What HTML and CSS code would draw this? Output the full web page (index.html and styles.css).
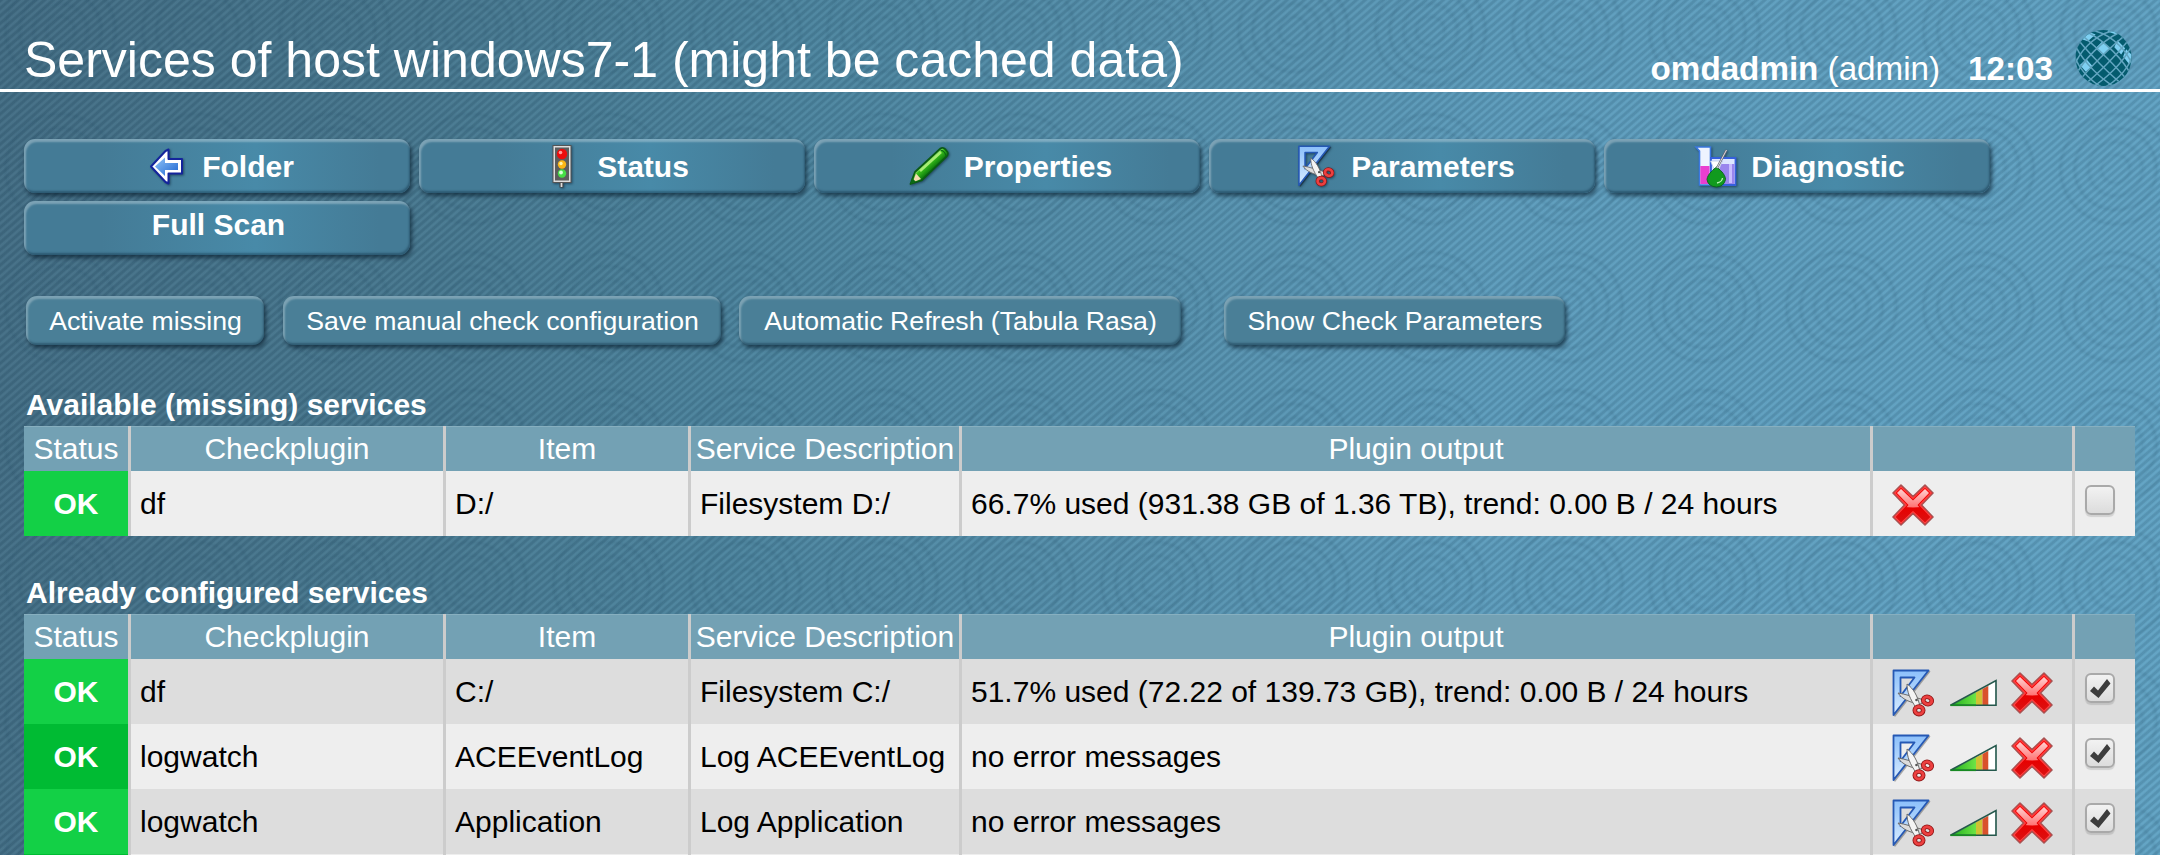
FILE: index.html
```html
<!DOCTYPE html>
<html lang="en">
<head>
<meta charset="utf-8">
<title>Services of host windows7-1</title>
<link rel="stylesheet" href="styles.css">
</head>
<body>
<svg class="defs" aria-hidden="true">
  <defs>
    <linearGradient id="blue" x1="0" y1="0" x2="1" y2="1"><stop offset="0" stop-color="#8fc4f8"/><stop offset="1" stop-color="#1f66d0"/></linearGradient>
    <linearGradient id="rule" x1="0" y1="0" x2="0" y2="1"><stop offset="0" stop-color="#8cc0fb"/><stop offset="1" stop-color="#d9ecff"/></linearGradient>
    <linearGradient id="shine" x1="0" y1="0" x2="0" y2="1"><stop offset="0" stop-color="#ffd0d0"/><stop offset="1" stop-color="#ff7070"/></linearGradient>
    <linearGradient id="red" x1="0" y1="0" x2="0" y2="1"><stop offset="0" stop-color="#fa0c0c"/><stop offset=".55" stop-color="#e80000"/><stop offset="1" stop-color="#d81414"/></linearGradient>
    <linearGradient id="green" x1="0" y1="0" x2="1" y2="0"><stop offset="0" stop-color="#1fae1f"/><stop offset="1" stop-color="#6ee446"/></linearGradient>
    <linearGradient id="pen" gradientUnits="userSpaceOnUse" x1="16" y1="12" x2="26" y2="23"><stop offset="0" stop-color="#1c9c10"/><stop offset=".35" stop-color="#b4f08a"/><stop offset=".5" stop-color="#3cc41c"/><stop offset="1" stop-color="#0c7a0c"/></linearGradient>
    <clipPath id="ball"><circle cx="30" cy="30" r="28.5"/></clipPath>
    <clipPath id="cross-top"><path d="M0 0H42V20Q21 27 0 20Z"/></clipPath>
    <symbol id="i-cross" viewBox="0 0 42 42">
      <path d="M9 1L21 12.500L33 1L41 9L29.500 21L41 33L33 41L21 29.500L9 41L1 33L12.500 21L1 9Z" fill="url(#red)" stroke="#a85252" stroke-width="1.600" stroke-linejoin="round"/>
      <path d="M9 2.800L21 14.300L33 2.800L39.200 9L27.700 21L39.200 33L33 39.200L21 27.700L9 39.200L2.800 33L14.300 21L2.800 9Z" fill="none" stroke="#ff4444" stroke-width="1.100" stroke-linejoin="round"/>
      <path d="M9 5L21 16.500L33 5L37 9L25.500 21L28 24H14L16.500 21L5 9Z" fill="url(#shine)" clip-path="url(#cross-top)"/>
    </symbol>
    <symbol id="i-rule" viewBox="0 0 42 48">
      <path d="M3 48L38.500 2.500L37 1.500L1.500 46Z" fill="#000" opacity=".3"/>
      <path d="M1.500 1.500H36.500L1.500 46ZM8.500 8.500V27L22.500 8.500Z" fill="url(#rule)" fill-rule="evenodd" stroke="#2558b4" stroke-width="1.800" stroke-linejoin="round"/>
      <path d="M6 24C13 25 22 28 32 31L29 35C18 34 10 30 6 24Z" fill="#dcdcdc" stroke="#6d6d6d" stroke-width="1"/>
      <path d="M15 15C21 19 26 27 28 38L24 38.500C18 30 15 23 15 15Z" fill="#f4f4f4" stroke="#6d6d6d" stroke-width="1"/>
      <circle cx="24.500" cy="31" r="1.300" fill="#555"/>
      <ellipse cx="35.500" cy="31.500" rx="4.300" ry="3.600" fill="none" stroke="#8c1414" stroke-width="4.600" transform="rotate(20 35.500 31.500)"/>
      <ellipse cx="35.500" cy="31.500" rx="4.300" ry="3.600" fill="none" stroke="#ec4040" stroke-width="3" transform="rotate(20 35.500 31.500)"/>
      <ellipse cx="27" cy="41.300" rx="4.200" ry="3.800" fill="none" stroke="#8c1414" stroke-width="4.600"/>
      <ellipse cx="27" cy="41.300" rx="4.200" ry="3.800" fill="none" stroke="#ec4040" stroke-width="3"/>
    </symbol>
    <symbol id="i-graph" viewBox="0 0 48 28">
      <path d="M2 26L27 13.200V26Z" fill="url(#green)"/>
      <path d="M27 13.200L33.500 9.900V26H27Z" fill="#cfc233"/>
      <path d="M33.500 9.900L39.500 6.700V26H33.500Z" fill="#d9512c"/>
      <path d="M39.500 6.700L46.500 2V26H39.500Z" fill="#fff"/>
      <path d="M1.500 26.300L47 1.500V26.300Z" fill="none" stroke="#24584c" stroke-width="1.600"/>
      <path d="M1.500 26.300H27" stroke="#178a22" stroke-width="1.600"/>
    </symbol>
    <symbol id="i-check" viewBox="0 0 30 30"><path d="M5 18L9 13.500L13 17.500L22 6L25.500 10.500L13.500 25Z" fill="#3d3d3d"/></symbol>
  </defs>
</svg>

<header class="top">
  <h1>Services of host windows7-1 (might be cached data)</h1>
  <div class="user"><span><b>omdadmin</b> (admin)</span><b>12:03</b></div>
  <svg class="globe" viewBox="0 0 60 60">
    <circle cx="30" cy="30" r="28.500" fill="#045b6e"/>
    <g clip-path="url(#ball)">
      <path d="M29 13L36 20L29 27L22 20ZM44 12L52 20L48 26.500L41 19ZM53 21L59 27L56 36L50 28.500ZM12.500 31L18.500 38L12 44L6 37ZM14 3L22 6L14 13L8 11ZM36 0L46 3L43 6L34 3Z" fill="#7fd0f2"/>
      <g fill="none" stroke="#62a5c0" stroke-width="1.500" transform="translate(0 3) rotate(45 30 30)">
        <ellipse cx="30" cy="30" rx="4.600" ry="44"/><ellipse cx="30" cy="30" rx="13.800" ry="42"/><ellipse cx="30" cy="30" rx="22.500" ry="38"/>
        <ellipse cx="30" cy="30" rx="44" ry="4.600"/><ellipse cx="30" cy="30" rx="42" ry="13.800"/><ellipse cx="30" cy="30" rx="38" ry="22.500"/>
      </g>
    </g>
  </svg>
</header>

<nav class="context">
  <a class="ctx">
    <svg class="ico" viewBox="0 0 42 42"><path d="M22.500 4.500V14H36V28.500H22.500V38.500L19.500 37L5 21.500L19.500 6Z" fill="#fff" stroke="#14249c" stroke-width="2" stroke-linejoin="round"/><path d="M19 12.500V18H32V25H19V31L9 21.500Z" fill="url(#blue)"/></svg>
    <span>Folder</span></a>
  <a class="ctx">
    <svg class="ico" viewBox="0 0 42 42"><path d="M20.500 37V42.500" stroke="#444" stroke-width="4"/><path d="M20.500 37V42" stroke="#ddd" stroke-width="1.800"/><rect x="12" y="0.500" width="18" height="37" fill="#dedede" stroke="#555" stroke-width="1"/><rect x="14" y="2.500" width="14" height="33" fill="#5d5d5d"/><circle cx="21" cy="9" r="5.200" fill="#ec0c0c"/><circle cx="19.500" cy="7.500" r="1.800" fill="#ff9a9a"/><circle cx="21" cy="19.500" r="4.200" fill="#fbb616"/><circle cx="20" cy="18.500" r="1.700" fill="#fff3ad"/><circle cx="21" cy="28.500" r="4.200" fill="#45dd45"/><circle cx="20" cy="27.500" r="1.900" fill="#d8ffd8"/></svg>
    <span>Status</span></a>
  <a class="ctx">
    <svg class="ico" viewBox="0 0 42 42"><path d="M2.500 39L7 27L32.500 3.500Q35 2 37.500 4.500L39.500 7Q40.500 9.500 38.500 11.500L13.500 35.500Z" fill="url(#pen)" stroke="#0b5c14" stroke-width="1.800" stroke-linejoin="round"/><path d="M8 28.500L13 34L4.500 37.500Z" fill="#f4dcb0"/><path d="M2.500 39L4 33L8 36.800Z" fill="#0b6a14"/><path d="M32.500 5Q37 6 38 11" fill="none" stroke="#0b6a14" stroke-width="1.200"/><path d="M12 26L33 7" stroke="#a8ee74" stroke-width="2.600"/></svg>
    <span>Properties</span></a>
  <a class="ctx">
    <svg class="ico" viewBox="0 0 42 48"><use href="#i-rule"/></svg>
    <span>Parameters</span></a>
  <a class="ctx">
    <svg class="ico" viewBox="0 0 42 42"><path d="M1 2H15.500V40H4.500V6Z" fill="#eef3ff" stroke="#3b78e0" stroke-width="1.600"/><path d="M5.300 21H14.500V39H5.300Z" fill="#e93fd0"/><path d="M16 13H40.500V40H16Z" fill="#dde6ff" stroke="#3560dc" stroke-width="1.800"/><path d="M21 19H39.500V39H21Z" fill="#9a86ee"/><path d="M34 19H37V38H34Z" fill="#c9bdff"/><path d="M15.500 16H27.500L24 24H19Z" fill="#fff" stroke="#b9c7e8" stroke-width=".8"/><path d="M21.500 22C24 24 30.500 29 30.500 34.500Q29 41.500 21.500 42Q13 41.500 12 34.500C12.500 29 19 24 21.500 22Z" fill="#119a1e" stroke="#0c6420" stroke-width="1"/><path d="M22 38Q27 37 27.500 33" stroke="#b9f2b4" stroke-width="1.300" fill="none"/><path d="M22 23L31.500 5" stroke="#667" stroke-width="2.200"/><path d="M22 23L31.500 5" stroke="#ddd" stroke-width="1"/></svg>
    <span>Diagnostic</span></a>
  <a class="ctx plain"><span>Full Scan</span></a>
</nav>

<div class="actions">
  <button class="act a1">Activate missing</button>
  <button class="act a2">Save manual check configuration</button>
  <button class="act a3">Automatic Refresh (Tabula Rasa)</button>
  <button class="act a4">Show Check Parameters</button>
</div>

<h2>Available (missing) services</h2>
<table class="data">
  <colgroup><col class="c1"><col class="c2"><col class="c3"><col class="c4"><col class="c5"><col class="c6"><col class="c7"></colgroup>
  <tr><th>Status</th><th>Checkplugin</th><th>Item</th><th>Service Description</th><th>Plugin output</th><th></th><th></th></tr>
  <tr class="odd"><td class="ok">OK</td><td>df</td><td>D:/</td><td>Filesystem D:/</td><td>66.7% used (931.38 GB of 1.36 TB), trend: 0.00 B / 24 hours</td><td><div class="icons"><svg class="x"><use href="#i-cross"/></svg></div></td><td><div class="box"></div></td></tr>
</table>

<h2 class="second">Already configured services</h2>
<table class="data">
  <colgroup><col class="c1"><col class="c2"><col class="c3"><col class="c4"><col class="c5"><col class="c6"><col class="c7"></colgroup>
  <tr><th>Status</th><th>Checkplugin</th><th>Item</th><th>Service Description</th><th>Plugin output</th><th></th><th></th></tr>
  <tr class="even"><td class="ok">OK</td><td>df</td><td>C:/</td><td>Filesystem C:/</td><td>51.7% used (72.22 of 139.73 GB), trend: 0.00 B / 24 hours</td><td><div class="icons"><svg class="p"><use href="#i-rule"/></svg><svg class="g"><use href="#i-graph"/></svg><svg class="x"><use href="#i-cross"/></svg></div></td><td><div class="box"><svg><use href="#i-check"/></svg></div></td></tr>
  <tr class="odd"><td class="ok dark">OK</td><td>logwatch</td><td>ACEEventLog</td><td>Log ACEEventLog</td><td>no error messages</td><td><div class="icons"><svg class="p"><use href="#i-rule"/></svg><svg class="g"><use href="#i-graph"/></svg><svg class="x"><use href="#i-cross"/></svg></div></td><td><div class="box"><svg><use href="#i-check"/></svg></div></td></tr>
  <tr class="even"><td class="ok">OK</td><td>logwatch</td><td>Application</td><td>Log Application</td><td>no error messages</td><td><div class="icons"><svg class="p"><use href="#i-rule"/></svg><svg class="g"><use href="#i-graph"/></svg><svg class="x"><use href="#i-cross"/></svg></div></td><td><div class="box"><svg><use href="#i-check"/></svg></div></td></tr>
  <tr class="odd last"><td class="ok dark"></td><td></td><td></td><td></td><td></td><td></td><td></td></tr>
</table>
</body>
</html>
```
FILE: styles.css
```css
* { box-sizing: border-box; }
html, body { height: 855px; overflow: hidden; }
body {
  margin: 0;
  font-family: "Liberation Sans", Arial, sans-serif;
  font-size: 30px;
  color: #fff;
  background:
    repeating-linear-gradient(139deg, rgba(20, 60, 85, .17) 0 1.5px, rgba(120, 180, 210, .07) 3px 4.200px, rgba(20, 60, 85, .17) 5.700px),
    radial-gradient(circle at 50% 50%, transparent 11px, rgba(20, 60, 85, .07) 14px, transparent 18px, transparent 23px, rgba(20, 60, 85, .07) 27px, transparent 31px, transparent 37px, rgba(20, 60, 85, .09) 41px, transparent 44px, transparent 51px, rgba(20, 60, 85, .09) 55px, transparent 58px) 129px 100px / 137px 138px,
    linear-gradient(96deg, #446c82 0%, #48768c 18%, #4e859e 36%, #568faa 50%, #5f9dbc 68%, #63a4c4 100%);
}
.defs { position: absolute; width: 0; height: 0; }

.top {
  height: 92px;
  border-bottom: 3px solid #fff;
  padding-left: 24px;
  padding-right: 27px;
  display: flex;
  align-items: flex-start;
}
h1 { margin: 31px auto 0 0; font-size: 50.040px; line-height: 58px; font-weight: normal; white-space: nowrap; }
.user { display: flex; gap: 28px; margin: 50px 21px 0 0; font-size: 33.200px; line-height: 38px; white-space: nowrap; }
.globe { width: 59px; height: 60px; margin-top: 28px; }

.context { display: flex; flex-wrap: wrap; gap: 8px 9px; padding: 47px 0 0 24px; width: 2060px; }
.ctx {
  width: 386px;
  height: 54px;
  border-radius: 11px;
  display: flex;
  align-items: center;
  justify-content: center;
  padding-right: 1px;
  font-weight: bold;
  line-height: 34px;
  background: linear-gradient(90deg, #447b96 20%, #488aa8 60%, #447b96 92%);
  box-shadow: inset 2px 3px 2px rgba(255, 255, 255, .3), inset -1px -2px 2px rgba(0, 30, 50, .35), 2px 3px 4px rgba(0, 20, 35, .6);
}
.ctx span { padding-top: 2px; }
.ctx.plain { align-items: flex-start; padding-left: 4px; }
.ctx.plain span { padding-top: 7px; }
.ico { width: 42px; height: 42px; margin: 0 14px 0 7px; overflow: visible; filter: drop-shadow(1px 1px 1px rgba(0, 20, 40, .5)); }

.actions { display: flex; padding: 41px 0 0 26px; }
.act {
  height: 49px;
  border: 0;
  padding: 0 0 0 1px;
  border-radius: 11px;
  color: #fff;
  font: 26.670px/46px "Liberation Sans", Arial, sans-serif;
  white-space: nowrap;
  background: #4a7f97;
  box-shadow: inset 2px 3px 2px rgba(255, 255, 255, .28), inset -1px -2px 2px rgba(0, 30, 50, .35), 2px 3px 4px rgba(0, 20, 35, .6);
}
.a1 { width: 238px; margin-right: 19px; }
.a2 { width: 438px; margin-right: 18px; }
.a3 { width: 442px; margin-right: 43px; }
.a4 { width: 341px; }

h2 { margin: 43px 0 4px 26px; font-size: 30px; line-height: 34px; }
h2.second { margin-top: 40px; }

.data { width: 2111px; margin-left: 24px; border-spacing: 0; table-layout: fixed; color: #000; }
.c1 { width: 104px; }
.c2 { width: 315px; }
.c3 { width: 245px; }
.c4 { width: 271px; }
.c5 { width: 911px; }
.c6 { width: 202px; }
.c7 { width: 63px; }
th, td { padding: 0; white-space: nowrap; border-left: 3px solid #ccc; }
th:first-child, td:first-child { border-left: 0; }
th { height: 45px; line-height: 43px; font-weight: normal; color: #fff; background: #73a1b4; box-shadow: inset 0 1px 0 rgba(255, 255, 255, .15); }
td { height: 65px; line-height: 61px; padding-left: 9px; }
.odd td { background: #eee; }
.even td { background: #ddd; }
.last td { height: 1px; line-height: 1px; }
.data tr td.ok { padding: 0; text-align: center; font-weight: bold; color: #fff; background: #13d046; }
.data tr td.dark { background: #00bb33; }
.icons { display: flex; align-items: center; height: 65px; padding-left: 10px; }
.icons svg { display: block; }
.icons .x { width: 42px; height: 42px; margin-top: 2px; }
.icons .p { width: 42px; height: 48px; margin: 2px 15px 0 0; }
.icons .g { width: 48px; height: 28px; margin: 3px 14px 0 0; }
.box {
  width: 30px;
  height: 30px;
  margin: 0 0 8px 1px;
  border: 2px solid #a9a9a9;
  border-radius: 6px;
  background: linear-gradient(#f2f2f2, #dcdcdc);
  box-shadow: 0 2px 1px rgba(0, 0, 0, .12);
}
.box svg { display: block; width: 30px; height: 30px; margin: -2px; }
```
